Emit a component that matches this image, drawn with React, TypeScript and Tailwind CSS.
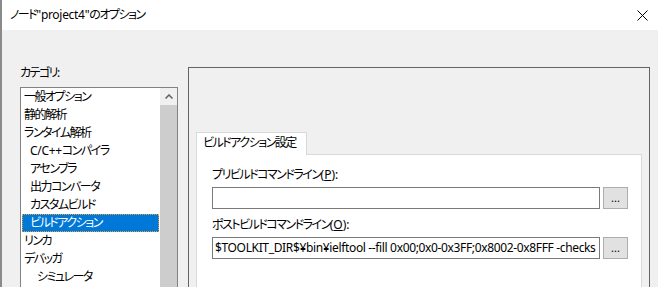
import React from 'react';

type Item = { label: string; indent: number };

const items: Item[] = [
  { label: '一般オプション', indent: 0 },
  { label: '静的解析', indent: 0 },
  { label: 'ランタイム解析', indent: 0 },
  { label: 'C/C++コンパイラ', indent: 1 },
  { label: 'アセンブラ', indent: 1 },
  { label: '出力コンバータ', indent: 1 },
  { label: 'カスタムビルド', indent: 1 },
  { label: 'ビルドアクション', indent: 1 },
  { label: 'リンカ', indent: 0 },
  { label: 'デバッガ', indent: 0 },
  { label: 'シミュレータ', indent: 2 },
];

const SELECTED = 7;

const font = { fontFamily: '"Noto Sans", "Noto Sans CJK JP", sans-serif' };

const JText = ({ text }: { text: string }) => (
  <>
    {text.split(/([\x20-\x7e]+)/).filter(Boolean).map((part, i) =>
      /^[\x20-\x7e]+$/.test(part) ? (
        <span key={i} className="tracking-[-0.3px]">{part}</span>
      ) : (
        <span key={i} className="tracking-[-1.5px]">{part}</span>
      )
    )}
  </>
);

const CommandField = ({ label, mnemonic, value }: { label: string; mnemonic: string; value?: string }) => (
  <div className="flex flex-col">
    <div className="h-[16px] leading-[16px] text-[12px] text-black">
      <JText text={label} />
      (<span className="underline">{mnemonic}</span>):
    </div>
    <div className="mt-[4px] flex items-center gap-[3px]">
      <div className="h-[22px] w-[388px] border border-[#7a7a7a] bg-white overflow-hidden whitespace-nowrap px-[2px] text-[12px] leading-[20px] tracking-[-0.35px] text-black">
        {value}
      </div>
      <button className="h-[22px] w-[25px] border border-[#adadad] bg-[#e1e1e1] text-[11px] leading-[16px] text-black">
        ...
      </button>
    </div>
  </div>
);

const App: React.FC = () => {
  return (
    <div
      className="w-[658px] h-[287px] overflow-hidden bg-[#f0f0f0] border-l-2 border-[#8a8a8a] text-black [font-feature-settings:'palt']"
      style={font}
    >
      {/* --- Title bar --- */}
      <div className="h-[30px] bg-white flex items-center justify-between pl-[8px] pr-[8px]">
        <span className="text-[12px] leading-[16px]">
          <JText text={'ノード"project4"のオプション'} />
        </span>
        <svg width="11" height="11" viewBox="0 0 11 11" className="mr-[2px]">
          <path d="M0.5 0.5 L10.5 10.5 M10.5 0.5 L0.5 10.5" stroke="#000" strokeWidth="1" />
        </svg>
      </div>

      {/* --- Body --- */}
      <div className="flex pl-[18px]">
        <div className="flex flex-col pt-[35px]">
          <div className="h-[16px] leading-[16px] text-[12px] tracking-[-1.5px]">カテゴリ:</div>
          <div className="mt-[6px] w-[158px] h-[220px] border border-[#828282] bg-white flex">
            <div className="flex-1 flex flex-col">
              {items.map((it, i) => (
                <div
                  key={it.label}
                  className={
                    i === SELECTED
                      ? 'h-[18px] mx-[1px] leading-[16px] text-[12px] bg-[#0078d7] text-white border border-dotted border-[#f0a030]'
                      : 'h-[18px] mx-[1px] leading-[18px] text-[12px]'
                  }
                  style={{ paddingLeft: (i === SELECTED ? 0 : 1) + [1, 7, 14][it.indent] }}
                >
                  <JText text={it.label} />
                </div>
              ))}
            </div>
            <div className="w-[17px] bg-[#cdcdcd] flex flex-col">
              <div className="h-[17px] bg-[#f0f0f0] flex items-center justify-center">
                <svg width="8" height="5" viewBox="0 0 8 5">
                  <path d="M0.5 4.5 L4 1 L7.5 4.5" fill="none" stroke="#606060" strokeWidth="1.5" />
                </svg>
              </div>
            </div>
          </div>
        </div>

        {/* --- Right panel --- */}
        <div className="ml-[10px] mt-[37px] w-[462px] h-[240px] border border-[#646464] pl-[7px] pr-[7px] pt-[64px]">
          <div className="flex">
            <div className="h-[23px] w-[111px] border border-b-0 border-[#d9d9d9] bg-white pl-[6px] text-[12px] leading-[20px] tracking-[-1.5px] whitespace-nowrap -mb-[1px] relative">
              ビルドアクション設定
            </div>
          </div>
          <div className="h-[200px] border border-[#d9d9d9] bg-white pl-[15px] pt-[12px] flex flex-col">
            <CommandField label="プリビルドコマンドライン" mnemonic="P" />
            <div className="mt-[8px]">
              <CommandField
                label="ポストビルドコマンドライン"
                mnemonic="O"
                value="$TOOLKIT_DIR$¥bin¥ielftool --fill 0x00;0x0-0x3FF;0x8002-0x8FFF -checks"
              />
            </div>
          </div>
        </div>
      </div>
    </div>
  );
};

export default App;
